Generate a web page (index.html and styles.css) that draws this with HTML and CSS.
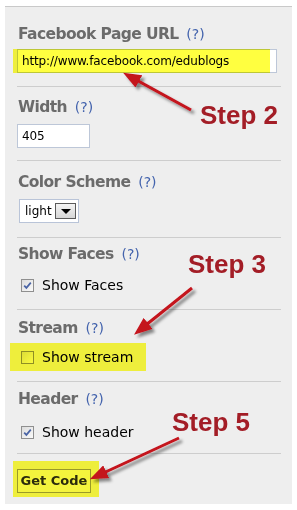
FILE: index.html
```html
<!DOCTYPE html>
<html lang="en">
<head>
    <meta charset="UTF-8">
    <meta name="viewport" content="width=device-width, initial-scale=1.0">
    <title>Like Box Settings</title>
    <link rel="stylesheet" href="styles.css">
</head>
<body>
    <div class="panel">
        <div class="field field-url">
            <div class="label">Facebook Page URL <span class="help">(?)</span></div>
            <div class="text-input url-input">http://www.facebook.com/edublogs</div>
        </div>
        <div class="field field-width">
            <div class="label">Width <span class="help">(?)</span></div>
            <div class="text-input width-input">405</div>
        </div>
        <div class="field field-color">
            <div class="label">Color Scheme <span class="help">(?)</span></div>
            <div class="select">
                <span class="select-value">light</span>
                <span class="select-button"><span class="triangle"></span></span>
            </div>
        </div>
        <div class="field field-faces">
            <div class="label">Show Faces <span class="help">(?)</span></div>
            <div class="check-row">
                <span class="checkbox checked">
                    <svg viewBox="0 0 13 13" width="13" height="13"><path d="M3.2 6.6 L5.4 8.9 L9.8 3.6" /></svg>
                </span>
                Show Faces
            </div>
        </div>
        <div class="field field-stream">
            <div class="label">Stream <span class="help">(?)</span></div>
            <div class="check-wrap">
                <div class="check-row">
                    <span class="checkbox"></span>
                    Show stream
                </div>
            </div>
        </div>
        <div class="field field-header">
            <div class="label">Header <span class="help">(?)</span></div>
            <div class="check-row">
                <span class="checkbox checked">
                    <svg viewBox="0 0 13 13" width="13" height="13"><path d="M3.2 6.6 L5.4 8.9 L9.8 3.6" /></svg>
                </span>
                Show header
            </div>
        </div>
        <div class="field field-submit">
            <div class="button">Get Code</div>
        </div>
    </div>

    <!-- annotation layer -->
    <div class="mark mark-url"></div>
    <div class="mark mark-stream"></div>
    <div class="mark mark-button"></div>

    <svg class="arrows" width="297" height="510" viewBox="0 0 297 510">
        <defs>
            <marker id="head" markerUnits="userSpaceOnUse" markerWidth="18" markerHeight="14" refX="9" refY="7" orient="auto">
                <path d="M0 0 L18 7 L0 14 Z" fill="#c4121b" />
            </marker>
            <filter id="shadow" x="-20%" y="-20%" width="140%" height="140%">
                <feDropShadow dx="3" dy="3" stdDeviation="1.6" flood-color="#000" flood-opacity="0.45" />
            </filter>
        </defs>
        <g filter="url(#shadow)" stroke="#c4121b" stroke-width="3" fill="none">
            <line x1="191" y1="110" x2="131" y2="77" marker-end="url(#head)" />
            <line x1="192" y1="288" x2="141" y2="329" marker-end="url(#head)" />
            <line x1="179" y1="438" x2="98" y2="475.5" marker-end="url(#head)" />
        </g>
    </svg>

    <div class="step step-2">Step 2</div>
    <div class="step step-3">Step 3</div>
    <div class="step step-5">Step 5</div>
</body>
</html>
```
FILE: styles.css
```css
body {
    margin: 0;
    width: 297px;
    height: 510px;
    overflow: hidden;
    position: relative;
    background-color: #fff;
    font-family: Tahoma, "DejaVu Sans", sans-serif;
    color: #000;
}
.panel {
    margin: 6px 5px 0 5px;
    height: 497px;
    padding: 0 11px 0 12px;
    border-top: 1px solid #c9c9c9;
    background-color: #eeeeee;
}
.field {
    border-bottom: 1px solid #cdcdcd;
}
.field-submit {
    border-bottom: 0;
}
.field-url { padding: 17px 0 13px; }
.field-width { padding: 10px 0 12px; }
.field-color { padding: 11px 0 14px; }
.field-faces { padding: 6px 0 14px; }
.field-stream { padding: 8px 0 10px; }
.field-header { padding: 7px 0 11px; }
.field-submit { padding: 15px 0 0; }

.label {
    height: 20px;
    line-height: 20px;
    padding-left: 1px;
    font-size: 15.5px;
    font-weight: bold;
    letter-spacing: -0.6px;
    color: #6b6b6b;
    white-space: nowrap;
}
.help {
    margin-left: 3px;
    font-size: 14px;
    font-weight: normal;
    letter-spacing: 0;
    color: #4363ad;
}
.text-input {
    box-sizing: border-box;
    height: 24px;
    line-height: 22px;
    padding-left: 4px;
    border: 1px solid #bdc7d8;
    background-color: #fff;
    font-size: 12px;
    letter-spacing: -0.15px;
    white-space: nowrap;
}
.url-input {
    width: 260px;
    margin-top: 5px;
}
.width-input {
    width: 73px;
    margin-top: 7px;
}
.select {
    box-sizing: border-box;
    display: flex;
    align-items: center;
    justify-content: space-between;
    width: 60px;
    height: 24px;
    margin: 7px 0 0 2px;
    padding: 0 2px 0 5px;
    border: 1px solid #b9c4d8;
    background-color: #fff;
    font-size: 12px;
}
.select-button {
    box-sizing: border-box;
    display: flex;
    align-items: center;
    justify-content: center;
    width: 21px;
    height: 16px;
    border: 1px solid #5a5a5a;
    background: linear-gradient(#f4f4f4, #d6d6d6);
}
.triangle {
    width: 0;
    height: 0;
    border-left: 5px solid transparent;
    border-right: 5px solid transparent;
    border-top: 5px solid #000;
}
.check-row {
    display: flex;
    align-items: center;
    gap: 8px;
    height: 20px;
    padding-left: 4px;
    font-size: 14px;
    white-space: nowrap;
}
.field-faces .check-row { margin-top: 11px; }
.field-header .check-row { margin-top: 13px; }
.check-wrap {
    margin-top: 5px;
    padding: 4px 0;
}
.checkbox {
    box-sizing: border-box;
    display: inline-block;
    width: 13px;
    height: 13px;
    border: 1px solid #8f8f8f;
    background: linear-gradient(135deg, #dcdcdc, #fafafa);
}
.checkbox svg {
    display: block;
    margin: -1px;
    fill: none;
    stroke: #4a64a5;
    stroke-width: 1.7;
}
.button {
    box-sizing: border-box;
    width: 74px;
    height: 24px;
    line-height: 22px;
    text-align: center;
    border: 1px solid #9a9a9a;
    background-color: #f4f4f4;
    font-size: 13px;
    font-weight: bold;
    color: #2b2b2b;
}

/* highlighter marks drawn over the form */
.mark {
    position: absolute;
    background-color: #ffff40;
    mix-blend-mode: multiply;
}
.mark-url { left: 13px; top: 49px; width: 257px; height: 24px; }
.mark-stream { left: 10px; top: 343px; width: 136px; height: 28px; }
.mark-button { left: 13px; top: 461px; width: 86px; height: 36px; }

.arrows {
    position: absolute;
    left: 0;
    top: 0;
    pointer-events: none;
}
.step {
    position: absolute;
    font-family: "Liberation Sans", Arial, sans-serif;
    font-size: 26px;
    line-height: 26px;
    font-weight: bold;
    color: #a31d26;
    white-space: nowrap;
}
.step-2 { left: 200px; top: 102px; }
.step-3 { left: 188px; top: 251px; }
.step-5 { left: 172px; top: 409px; }
```
